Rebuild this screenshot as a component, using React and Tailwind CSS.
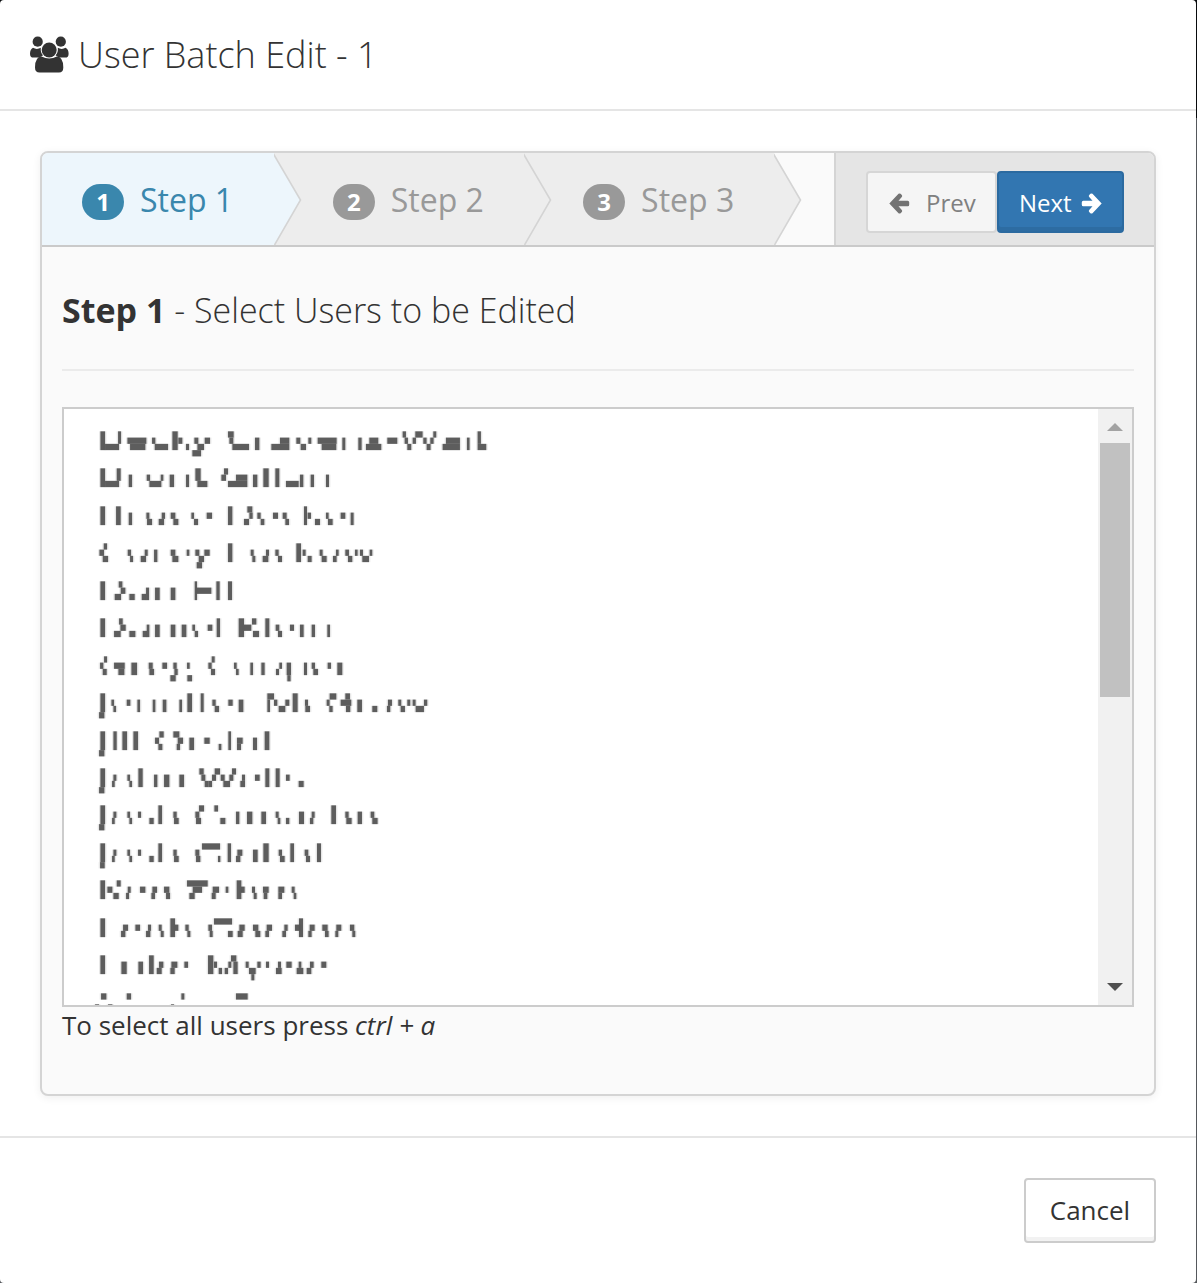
import React from "react";

// Each mark of a masked row: x, width, first band, last band (exclusive).
// x and width are in thirds of a pixel; every band is one mosaic cell high.
const MASKED_ROWS = [
  "151 14 0 3,165 42 2 3,204 9 0 2,232 57 1 2,240 46 2 3,306 10 1 2,314 40 2 3,367 16 0 3,385 12 1 2,408 9 2 3,433 12 1 2,464 16 1 2,442 20 2 3,427 26 3 4,534 17 0 1,538 12 1 2,547 50 2 3,615 13 1 3,690 28 1 2,664 54 2 3,739 12 1 2,775 9 1 2,752 16 2 3,803 57 1 2,815 44 2 3,877 9 1 3,925 10 1 3,958 27 1 2,948 46 2 3,1012 30 1 2,1058 10 0 1,1064 10 1 2,1072 12 2 3,1096 22 0 1,1088 10 1 2,1120 10 1 2,1130 12 2 3,1141 10 1 2,1150 9 0 1,1188 42 1 2,1178 52 2 3,1251 8 1 3,1283 10 0 2,1283 26 2 3",
  "151 14 0 3,165 42 2 3,200 12 0 2,236 10 1 3,290 10 1 2,298 36 2 3,332 8 1 2,359 13 1 3,408 9 1 3,436 16 0 2,442 30 2 3,522 12 0 1,514 14 1 2,534 58 2 3,558 34 1 2,609 13 1 3,640 16 0 3,676 12 0 3,708 38 2 3,750 10 1 3,782 10 1 3,828 9 1 3",
  "151 14 0 3,198 14 0 3,236 10 1 3,289 9 1 2,291 15 2 3,335 10 1 2,326 16 2 3,362 14 1 2,370 15 2 3,424 8 1 2,432 12 2 3,470 16 1 2,534 13 0 3,592 15 0 1,598 10 1 2,582 15 2 3,622 10 1 2,632 11 2 3,669 15 1 2,698 12 1 2,706 11 2 3,762 9 0 3,773 10 1 2,795 15 2 3,828 8 1 2,834 14 2 3,872 14 1 2,902 9 1 3",
  "161 10 0 1,148 14 1 2,158 16 2 3,233 10 1 2,240 9 2 3,284 9 1 2,272 16 2 3,312 10 1 3,362 14 1 2,367 18 2 3,410 8 1 2,436 12 1 2,463 16 1 2,446 16 2 3,440 16 3 4,534 13 0 3,602 9 1 2,607 9 2 3,648 9 1 2,638 17 2 3,676 10 1 2,684 12 2 3,739 14 0 3,758 9 1 2,773 12 2 3,809 9 1 2,815 15 2 3,858 8 1 2,849 11 2 3,886 11 1 2,894 13 2 3,915 8 1 2,930 9 1 2,937 20 2 3,959 8 1 2",
  "151 14 0 3,206 11 0 1,212 14 1 2,194 19 2 3,238 16 2 3,288 9 1 3,275 13 2 3,315 14 1 3,362 14 1 3,434 7 0 3,440 44 1 2,499 10 0 3,534 12 0 3",
  "151 14 0 3,207 11 0 1,211 16 1 2,192 20 2 3,238 18 2 3,290 8 1 3,278 13 2 3,315 14 1 3,362 14 1 3,395 14 1 3,427 8 1 2,434 10 2 3,473 14 1 2,500 10 0 3,566 16 0 3,582 22 1 2,606 13 0 1,609 18 2 3,646 12 0 3,677 11 1 2,684 12 2 3,720 12 1 2,750 11 1 3,785 10 1 3,832 8 1 3",
  "162 9 0 1,150 10 1 2,158 12 2 3,192 32 1 2,205 18 2 3,244 17 1 3,296 12 1 2,298 14 2 3,337 14 1 2,370 10 1 2,373 10 2 3,361 16 3 4,411 8 1 2,412 14 3 4,485 9 0 1,475 10 1 2,483 12 2 3,552 8 1 2,558 8 2 3,601 8 1 3,634 10 1 3,688 8 1 2,678 9 2 3,710 13 1 3,712 10 3 4,762 9 1 3,785 10 1 2,790 14 2 3,833 10 1 2,862 15 1 3",
  "151 14 0 3,147 16 3 4,184 8 1 2,190 8 2 3,230 11 1 2,262 8 1 3,308 8 1 3,338 11 1 3,388 8 1 3,412 14 0 3,452 9 0 3,487 10 1 2,494 13 2 3,535 13 1 2,566 14 1 3,652 20 0 1,652 8 1 3,672 10 1 2,686 20 2 3,706 12 1 2,728 15 0 3,765 9 1 2,766 14 2 3,839 20 0 1,830 9 1 2,838 10 2 3,886 14 0 1,872 32 1 2,888 13 2 3,922 14 1 3,967 15 2 3,1014 12 1 2,1011 10 2 3,1045 9 1 2,1052 13 2 3,1072 9 1 2,1088 9 1 2,1097 25 2 3,1122 10 1 2",
  "151 14 0 3,147 16 3 4,190 10 0 3,217 14 0 3,250 14 0 3,328 13 0 1,315 12 1 2,325 12 2 3,370 18 0 1,383 16 1 2,380 10 2 3,418 14 1 3,463 16 1 2,506 8 2 3,535 8 0 3,561 17 1 2,561 12 2 3,609 12 1 3,644 14 0 3",
  "151 14 0 3,147 16 3 4,190 9 1 2,186 8 2 3,232 8 1 2,238 8 2 3,265 13 0 3,312 10 1 3,342 16 1 3,388 14 1 3,448 13 0 1,454 12 1 2,464 12 2 3,494 16 0 1,486 12 1 2,476 10 2 3,512 12 1 2,520 20 2 3,538 12 1 2,546 12 0 1,576 9 1 2,571 14 2 3,615 14 1 2,646 12 0 3,677 12 0 3,708 11 1 2,746 15 2 3",
  "151 14 0 3,147 16 3 4,190 9 1 2,186 8 2 3,232 8 1 2,238 8 2 3,264 9 1 2,298 13 2 3,325 11 0 3,370 10 1 2,372 14 2 3,447 15 0 1,436 12 1 2,438 15 2 3,493 11 0 1,511 15 2 3,558 10 1 3,591 16 1 3,634 14 1 3,677 9 1 2,683 8 2 3,708 10 2 3,747 15 1 3,785 9 1 2,780 10 2 3,844 14 0 3,886 10 1 2,889 16 2 3,923 13 1 3,962 11 1 2,967 16 2 3",
  "151 14 0 3,150 14 3 4,190 9 1 2,186 8 2 3,232 8 1 2,238 8 2 3,264 9 1 2,298 13 2 3,325 11 0 3,370 10 1 2,372 14 2 3,456 54 0 1,436 12 1 2,438 13 2 3,504 7 2 3,533 10 0 3,562 15 1 2,558 13 2 3,609 14 1 3,640 16 0 3,686 10 1 2,690 14 2 3,721 11 0 3,764 11 1 2,768 12 2 3,801 12 0 3",
  "151 14 0 3,172 15 1 2,200 12 0 1,190 16 2 3,233 9 1 2,228 9 2 3,270 16 1 2,307 14 1 2,304 11 2 3,342 16 1 2,348 12 2 3,411 62 0 1,428 28 1 2,418 16 2 3,488 19 1 2,485 12 2 3,527 8 1 2,560 14 0 3,573 11 1 2,606 9 1 2,611 9 2 3,639 17 1 2,641 11 2 3,685 18 1 2,685 11 2 3,725 9 1 2,731 8 2 3",
  "151 14 0 3,219 15 1 2,213 13 2 3,256 14 1 2,294 9 1 2,288 13 2 3,326 9 1 2,332 9 2 3,361 14 0 3,374 11 1 2,406 10 1 2,412 9 2 3,492 54 0 1,475 11 1 2,479 9 2 3,534 14 2 3,568 16 1 2,563 15 2 3,609 16 1 2,616 15 2 3,650 16 1 2,646 11 2 3,703 10 1 2,697 11 2 3,747 12 0 3,735 16 1 2,779 15 1 2,775 10 2 3,817 16 1 2,825 11 2 3,859 15 1 2,856 9 2 3,900 13 1 2,907 9 2 3",
  "151 14 0 3,214 16 1 3,265 14 1 3,297 14 0 3,327 13 1 2,320 15 2 3,364 18 1 2,361 13 2 3,403 11 1 2,474 16 0 3,492 9 1 2,506 10 2 3,543 16 0 1,535 9 1 2,524 10 2 3,550 13 1 3,587 9 1 2,597 20 2 3,622 10 1 2,604 9 3 4,648 9 1 2,684 9 1 2,678 17 2 3,709 16 1 2,746 8 1 2,740 20 2 3,780 11 1 2,770 14 2 3,814 15 1 2",
  "153 16 0 1,230 13 0 1,394 9 0 1,558 35 0 1,135 12 1.75 2.2,174 13 1.75 2.2,363 9 1.75 2.2",
];

function MaskedName({ marks }) {
  return (
    <svg className="block h-[37.45px] w-[460px] shrink-0" viewBox="0 0 1380 112.35" aria-hidden="true">
      {marks.split(",").map((mark) => {
        const [x, w, from, to] = mark.split(" ").map(Number);
        const y = 13 + from * 18.8;
        const h = (to - from) * 18.8;
        return (
          <g key={mark}>
            <rect x={x - 4} y={y} width={w + 8} height={h} fill="#555" opacity=".15" />
            <rect x={x} y={y} width={w} height={h} fill="#555" opacity=".95" />
          </g>
        );
      })}
    </svg>
  );
}

function GroupIcon() {
  return (
    <svg className="mr-2 h-[37px] w-[40px] shrink-0" viewBox="0 0 40 37" fill="#333">
      <circle cx="7.7" cy="5.7" r="5.1" />
      <circle cx="30.8" cy="5.7" r="5.1" />
      <path d="M3 11.8C5.5 13.4 8.5 13.2 10.8 11.8Q10.2 16.5 13 19.3Q11.5 20.8 9.3 21.6H3.5Q0 21.6 0 17.7Q0 13.5 3 11.8Z" />
      <path d="M35.6 11.8C33.1 13.4 30.1 13.2 27.8 11.8Q28.4 16.5 25.6 19.3Q27.1 20.8 29.3 21.6H35.1Q38.6 21.6 38.6 17.7Q38.6 13.5 35.6 11.8Z" />
      <circle cx="19.2" cy="14" r="7.5" />
      <path d="M11.5 20.6Q19.2 24.6 26.9 20.6Q33.3 21 33.3 31.5Q33.3 36.6 29 36.6H9.6Q5 36.6 5 31.5Q5 21 11.5 20.6Z" />
    </svg>
  );
}

function Arrow({ className }) {
  return (
    <svg className={className} viewBox="0 0 21 21">
      <path d="M.3 10.5L9.5 .8Q10.5 0 11.6 .8L12.8 2Q13.7 3 12.8 4L9.5 7.8H18.7Q20.2 7.8 20.2 9.3V11.7Q20.2 13.2 18.7 13.2H9.5L12.8 17Q13.7 18 12.8 19L11.6 20.2Q10.5 21 9.5 20.2Z" fill="currentColor" />
    </svg>
  );
}

function Step({ number, active }) {
  return (
    <li className={`relative flex h-[92px] shrink-0 items-center ${number === 1 ? "w-[231.5px] pl-10" : "w-[250.3px] pl-[59.3px]"} ${active ? "bg-[#edf6fc] text-[#3a87ad]" : "bg-[#ededed] text-[#999]"}`}>
      <span className={`mt-[5px] flex h-9 w-[42px] items-center justify-center rounded-[18px] text-[24px] font-bold text-white ${active ? "bg-[#3a87ad]" : "bg-[#999]"}`}>{number}</span>
      <span className="mt-[2px] ml-4 text-[32px] whitespace-nowrap">Step {number}</span>
      <svg className="absolute top-0 left-full z-10 h-[92px] w-7" viewBox="0 0 28 92">
        <path d="M-1 0L0 1L26.5 47L0 92H-1Z" fill={active ? "#edf6fc" : "#ededed"} />
        <path d="M-.5 1L26.5 47L.5 92" fill="none" stroke="#d4d4d4" strokeWidth="1.6" />
      </svg>
    </li>
  );
}

export default function App() {
  return (
    <div className="h-[1283px] w-[1197px] bg-[linear-gradient(#080a0c_118px,#55585c_118px)] font-['Open_Sans',sans-serif] text-[#333]">
      <main className="flex h-full w-[1196px] flex-col rounded-[4px] bg-white">
        <header className="flex h-[111px] items-center border-b-2 border-[#e5e5e5] pl-[30px]">
          <GroupIcon />
          <h1 className="pt-px text-[36px] leading-[54px] font-light whitespace-nowrap">User Batch Edit - 1</h1>
        </header>
        <div className="h-[1025px] pt-10 pl-10">
          <section className="h-[945px] w-[1116px] overflow-hidden rounded-[8px] border-2 border-[#d4d4d4] bg-[#fafafa] shadow-[0_2px_8px_rgba(0,0,0,0.065)]">
            <div className="flex h-[94px] border-b-2 border-[#cacaca]">
              <ol className="flex">
                <Step number={1} active />
                <Step number={2} />
                <Step number={3} />
              </ol>
              <div className="ml-auto flex w-[320px] items-start border-l-2 border-[#d4d4d4] bg-[#e5e5e5] pt-[18px] pl-[30px]">
                <button className="flex h-[62px] w-[131px] items-center rounded-[4px] border-2 border-[#d6d6d6] bg-[#f5f5f5] pt-[3px] pl-[21px] text-[24px] text-[#808080]">
                  <Arrow className="h-[21px] w-[21px] text-[#737373]" />
                  <span className="ml-4 -mt-[2px]">Prev</span>
                </button>
                <button className="flex h-[62px] w-[127px] items-center rounded-[4px] border-2 border-[#2b6aa0] bg-[#3276b1] pt-[3px] pl-5 text-[24px] text-white shadow-[inset_0_-4px_0_#2d6ca2]">
                  <span className="-mt-[2px]">Next</span>
                  <Arrow className="ml-[9px] h-[21px] w-[21px] rotate-180" />
                </button>
              </div>
            </div>
            <div className="px-5 pt-[35px]">
              <h2 className="h-[89px] border-b-2 border-[#ebebeb] text-[34px] leading-[56px] font-light whitespace-nowrap">
                <strong className="font-bold">Step 1</strong> - Select Users to be Edited
              </h2>
              <div className="mt-9 flex h-[600px] border-2 border-[#ccc] bg-white">
                <div className="-ml-[14px] min-w-0 flex-1 overflow-hidden pt-[18px]">
                  {MASKED_ROWS.map((marks) => <MaskedName key={marks} marks={marks} />)}
                </div>
                <div className="flex w-[34px] flex-col items-center bg-[#f1f1f1]">
                  <svg className="mt-[14px] h-2 w-4" viewBox="0 0 16 8"><path d="M0 8L8 0L16 8Z" fill="#a3a3a3" /></svg>
                  <div className="mt-3 h-[254px] w-[30px] bg-[#c1c1c1]" />
                  <svg className="mt-auto mb-[14px] h-2 w-4" viewBox="0 0 16 8"><path d="M0 0H16L8 8Z" fill="#505050" /></svg>
                </div>
              </div>
              <p className="-mt-px text-[26px] leading-[39px] whitespace-nowrap">To select all users press <em>ctrl + a</em></p>
            </div>
          </section>
        </div>
        <footer className="flex flex-1 items-start justify-end border-t-2 border-[#e5e5e5] pt-10 pr-10">
          <button className="flex h-[65px] w-[132px] items-center justify-center rounded-[4px] border-2 border-[#ccc] bg-white text-[26px] shadow-[inset_0_-4px_0_#f2f2f2]">Cancel</button>
        </footer>
      </main>
    </div>
  );
}
